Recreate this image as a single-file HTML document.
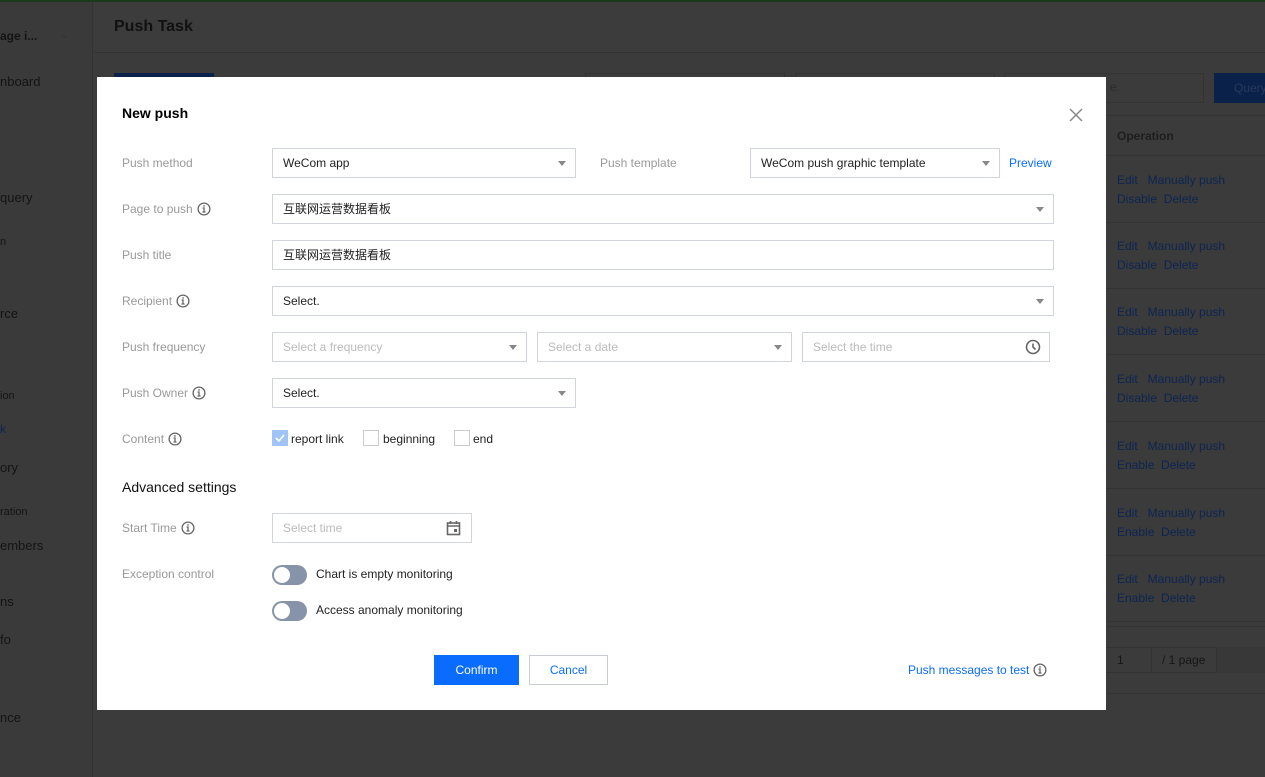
<!DOCTYPE html>
<html><head><meta charset="utf-8"><style>
*{box-sizing:border-box;margin:0;padding:0}
body{width:1265px;height:777px;overflow:hidden;background:#3b3b3b;font-family:"Liberation Sans","Noto Sans CJK SC",sans-serif;font-size:12px;position:relative}
.a{position:absolute;white-space:nowrap}
.side{left:0;top:2px;width:93px;height:775px;background:#3a3a3a;border-right:1px solid #333}
.st{color:#141414;font-size:13px}
.lnk{color:#0c2552;font-size:12px}
.modal{left:97px;top:77px;width:1009px;height:633px;background:#fff}
.lbl{color:#999;font-size:12px;line-height:14px}
.box{position:absolute;border:1px solid #d0d5dd;height:30px;background:#fff;font-size:12px;color:#222;padding-left:10px;line-height:28px}
.ph{color:#bbb}
.arr{position:absolute;right:9px;top:12px;width:0;height:0;border-left:4px solid transparent;border-right:4px solid transparent;border-top:5px solid #888}
.info{display:inline-block;width:14px;height:14px;vertical-align:top;margin-left:4px}
.cb{position:absolute;width:16px;height:16px;border:1px solid #ccc;background:#fff}
.tg{position:absolute;width:35px;height:20px;border-radius:10px;background:#8793a8}
.tg:after{content:"";position:absolute;left:2px;top:2px;width:16px;height:16px;border-radius:50%;background:#fff}
</style></head><body>
<svg width="0" height="0" style="position:absolute"><defs><symbol id="i" viewBox="0 0 14 14"><circle cx="7" cy="7" r="5.9" fill="none" stroke="#666" stroke-width="1.3"/><rect x="6.3" y="3.2" width="1.4" height="1.5" fill="#666"/><path d="M5.6 6h1.4v3.6M5.5 10h3" fill="none" stroke="#666" stroke-width="1.3"/></symbol></defs></svg>
<div class="a" style="left:0;top:0;width:1265px;height:2px;background:#1b3a1b"></div>
<div class="a side"></div>
<div class="a" style="left:94px;top:2px;width:1171px;height:51px;background:#3c3c3c;border-bottom:1px solid #333"></div>
<div class="a" style="left:114px;top:18px;font-size:16px;font-weight:bold;color:#111">Push Task</div>
<div class="a" style="left:0;top:29px;font-size:12px;font-weight:bold;color:#141414">age i...</div>
<div class="a" style="left:60px;top:30px;color:#333;font-size:10px">⌄</div>
<div class="a st" style="left:0;top:74px">nboard</div>
<div class="a st" style="left:0;top:190px">query</div>
<div class="a st" style="left:0;top:236px;font-size:11px">n</div>
<div class="a st" style="left:0;top:306px">rce</div>
<div class="a st" style="left:0;top:390px;font-size:11px">ion</div>
<div class="a" style="left:0;top:422px;color:#0c2552;font-size:12px">k</div>
<div class="a st" style="left:0;top:460px">ory</div>
<div class="a st" style="left:0;top:506px;font-size:11px">ration</div>
<div class="a st" style="left:0;top:538px">embers</div>
<div class="a st" style="left:0;top:594px">ns</div>
<div class="a st" style="left:0;top:632px">fo</div>
<div class="a st" style="left:0;top:710px">nce</div>
<div class="a" style="left:114px;top:73px;width:100px;height:4px;background:#0a214a"></div>
<div class="a" style="left:585px;top:73px;width:200px;height:4px;border:1px solid #333;border-bottom:0"></div>
<div class="a" style="left:795px;top:73px;width:200px;height:4px;border:1px solid #333;border-bottom:0"></div>
<div class="a" style="left:1004px;top:73px;width:200px;height:30px;border:1px solid #333"></div>
<div class="a" style="left:1110px;top:80px;color:#2a2a2a">e.</div>
<div class="a" style="left:1214px;top:73px;width:51px;height:30px;background:#0a214a;color:#2a3a5a;padding:8px 0 0 20px">Query</div>
<div class="a" style="left:1106px;top:115px;width:159px;height:1px;background:#333"></div>
<div class="a" style="left:1117px;top:129px;font-weight:bold;color:#1e1e1e">Operation</div>
<div class="a" style="left:1106px;top:155px;width:159px;height:1px;background:#333"></div>
<div id="rows"></div>
<div class="a" style="left:1106px;top:626px;width:159px;height:1px;background:#333"></div>
<div class="a" style="left:1106px;top:647px;width:159px;height:26px;border-top:1px solid #333;border-bottom:1px solid #333"></div>
<div class="a" style="left:1117px;top:653px;color:#161616">1</div>
<div class="a" style="left:1151px;top:647px;width:1px;height:26px;background:#333"></div>
<div class="a" style="left:1162px;top:653px;color:#161616">/ 1 page</div>
<div class="a" style="left:1216px;top:647px;width:49px;height:26px;background:#383838;border-left:1px solid #333"></div>
<div class="a" style="left:1106px;top:693px;width:159px;height:1px;background:#333"></div>
<script>
var t=[180,246,312,379,446,513,579],h='';
t.forEach(function(y,i){var s=i<4?'Disable':'Enable';h+='<div class="a lnk" style="left:1117px;top:'+(y-7)+'px">Edit&nbsp;&nbsp;&nbsp;Manually push</div><div class="a lnk" style="left:1117px;top:'+(y+12)+'px">'+s+'&nbsp;&nbsp;Delete</div><div class="a" style="left:1106px;top:'+(y+42)+'px;width:159px;height:1px;background:#333"></div>';});
document.getElementById('rows').innerHTML=h;
</script>

<div class="a modal">
<div class="a" style="left:25px;top:28px;font-size:14px;font-weight:bold;color:#000">New push</div>
<svg class="a" style="left:972px;top:31px" width="14" height="14" viewBox="0 0 14 14"><path d="M1 1l12 12M13 1L1 13" stroke="#888" stroke-width="1.5"/></svg>

<div class="a lbl" style="left:25px;top:79px">Push method</div>
<div class="box" style="left:175px;top:71px;width:304px">WeCom app<i class="arr"></i></div>
<div class="a lbl" style="left:503px;top:79px">Push template</div>
<div class="box" style="left:653px;top:71px;width:250px">WeCom push graphic template<i class="arr"></i></div>
<div class="a" style="left:912px;top:79px;color:#0a6cff">Preview</div>

<div class="a lbl" style="left:25px;top:125px">Page to push<svg class="info"><use href="#i"/></svg></div>
<div class="box" style="left:175px;top:117px;width:782px">互联网运营数据看板<i class="arr"></i></div>

<div class="a lbl" style="left:25px;top:171px">Push title</div>
<div class="box" style="left:175px;top:163px;width:782px">互联网运营数据看板</div>

<div class="a lbl" style="left:25px;top:217px">Recipient<svg class="info"><use href="#i"/></svg></div>
<div class="box" style="left:175px;top:209px;width:782px">Select.<i class="arr"></i></div>

<div class="a lbl" style="left:25px;top:263px">Push frequency</div>
<div class="box ph" style="left:175px;top:255px;width:255px">Select a frequency<i class="arr"></i></div>
<div class="box ph" style="left:440px;top:255px;width:255px">Select a date<i class="arr"></i></div>
<div class="box ph" style="left:705px;top:255px;width:248px">Select the time
<svg style="position:absolute;right:8px;top:6px" width="16" height="16" viewBox="0 0 16 16"><circle cx="8" cy="8" r="6.5" fill="none" stroke="#666" stroke-width="1.6"/><path d="M8 4.5V8l2.5 2.5" fill="none" stroke="#666" stroke-width="1.6"/></svg></div>

<div class="a lbl" style="left:25px;top:309px">Push Owner<svg class="info"><use href="#i"/></svg></div>
<div class="box" style="left:175px;top:301px;width:304px">Select.<i class="arr"></i></div>

<div class="a lbl" style="left:25px;top:355px">Content<svg class="info"><use href="#i"/></svg></div>
<div class="cb" style="left:175px;top:353px;background:#9fc5f8;border-color:#9fc5f8"><svg width="14" height="14" viewBox="0 0 14 14"><path d="M3 7l3 3 5-6" fill="none" stroke="#fff" stroke-width="1.6"/></svg></div>
<div class="a" style="left:194px;top:355px;color:#222">report link</div>
<div class="cb" style="left:266px;top:353px"></div>
<div class="a" style="left:286px;top:355px;color:#222">beginning</div>
<div class="cb" style="left:357px;top:353px"></div>
<div class="a" style="left:376px;top:355px;color:#222">end</div>

<div class="a" style="left:25px;top:402px;font-size:14px;color:#111">Advanced settings</div>

<div class="a lbl" style="left:25px;top:444px">Start Time<svg class="info"><use href="#i"/></svg></div>
<div class="box ph" style="left:175px;top:436px;width:200px">Select time
<svg style="position:absolute;right:10px;top:6px" width="15" height="16" viewBox="0 0 15 16"><rect x="1.5" y="3" width="12" height="11.5" fill="none" stroke="#666" stroke-width="1.6"/><path d="M1.5 6h12M4.5 1v3M10.5 1v3" stroke="#666" stroke-width="1.6"/><rect x="8" y="9" width="3" height="3" fill="#666"/></svg></div>

<div class="a lbl" style="left:25px;top:490px">Exception control</div>
<div class="tg" style="left:175px;top:488px"></div>
<div class="a" style="left:219px;top:490px;color:#222">Chart is empty monitoring</div>
<div class="tg" style="left:175px;top:524px"></div>
<div class="a" style="left:219px;top:526px;color:#222">Access anomaly monitoring</div>

<div class="a" style="left:337px;top:578px;width:85px;height:30px;background:#0a6cff;color:#fff;text-align:center;line-height:30px">Confirm</div>
<div class="a" style="left:432px;top:578px;width:79px;height:30px;border:1px solid #c8cdd5;color:#0a6cff;text-align:center;line-height:28px">Cancel</div>
<div class="a" style="left:811px;top:586px;color:#0a6cff;line-height:14px">Push messages to test<svg class="info"><use href="#i"/></svg></div>
</div>
</body></html>
